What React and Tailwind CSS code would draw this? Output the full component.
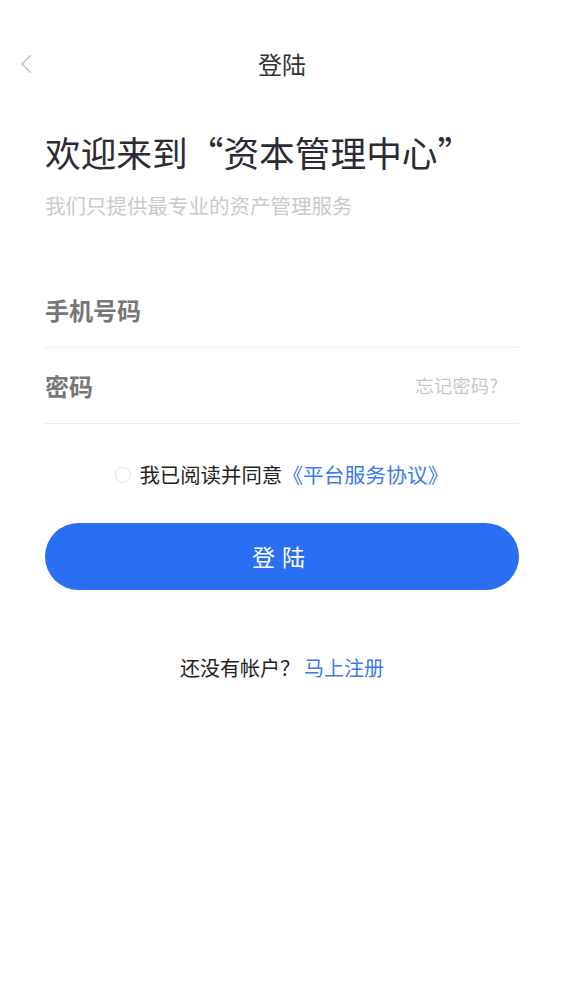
export default function App() {
  return (
    <div
      className="w-[564px] h-[1002px] bg-white flex flex-col"
      style={{ fontFamily: '"Noto Sans CJK SC", "Noto Sans", sans-serif' }}
    >
      {/* header */}
      <div className="relative h-[130px] flex items-start justify-center pt-[46px]">
        <button className="absolute left-[18px] top-[53px] text-[#c4c4c4]">
          <svg width="16" height="22" viewBox="0 0 16 22" fill="none">
            <path d="M13 2 L4 11 L13 20" stroke="currentColor" strokeWidth="1.6" />
          </svg>
        </button>
        <h1 className="text-[24px] leading-[36px] text-[#333]">登陆</h1>
      </div>

      <div className="px-[45px] flex flex-col">
        <h2 className="text-[35.7px] leading-[44px] text-[#2b2b33]">
          欢迎来到“资本管理中心”
        </h2>
        <p className="mt-[18px] text-[20.5px] leading-[26px] text-[#cacaca]">
          我们只提供最专业的资产管理服务
        </p>

        <div className="mt-[54px] flex flex-col">
          <div className="h-[76px] flex items-center border-b border-[#ececec]">
            <span className="text-[24px] font-bold text-[#777]">手机号码</span>
          </div>
          <div className="h-[76px] flex items-center justify-between border-b border-[#ececec]">
            <span className="text-[24px] font-bold text-[#777]">密码</span>
            <span className="text-[18.5px] text-[#c8c8c8] pr-[21px]">忘记密码?</span>
          </div>
        </div>

        <div className="mt-[35px] flex items-center justify-center">
          <span className="w-[16px] h-[16px] rounded-full border border-[#e4e4e4] mr-[8px]" />
          <span className="text-[20.4px] text-[#222]">我已阅读并同意</span>
          <span className="text-[20.8px] text-[#3b7ae8]">《平台服务协议》</span>
        </div>

        <button className="mt-[33px] h-[67px] w-full rounded-full bg-[#2a6ff2] text-white text-[23px] tracking-[7px]">
          登陆
        </button>

        <div className="mt-[63px] flex items-center justify-center">
          <span className="text-[20px] text-[#222]">还没有帐户？</span>
          <span className="ml-[4px] text-[20px] text-[#3b7ae8]">马上注册</span>
        </div>
      </div>
    </div>
  );
}
